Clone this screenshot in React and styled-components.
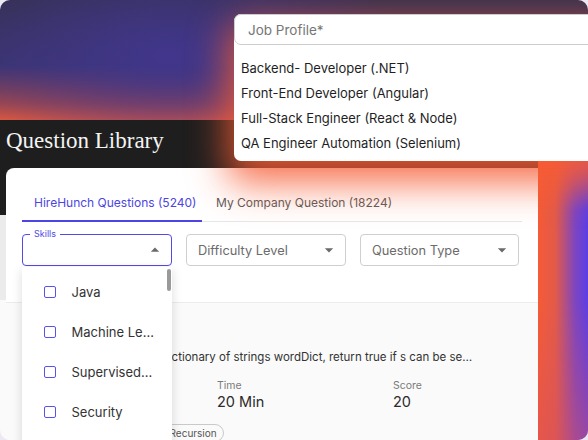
import React from 'react';
import styled, { createGlobalStyle } from 'styled-components';

const GlobalStyle = createGlobalStyle`
  html, body {
    margin: 0;
    padding: 0;
    background: #ece9f3;
  }
  * {
    box-sizing: border-box;
  }
`;

const Frame = styled.div`
  position: relative;
  width: 588px;
  height: 440px;
  overflow: hidden;
  border-radius: 10px;
  display: flex;
  flex-direction: column;
  font-family: Inter, "Noto Sans", sans-serif;
`;

const Hero = styled.div`
  height: 120px;
  flex: none;
  background:
    radial-gradient(ellipse 240px 110px at 170px 55px, #41368c 0%, rgba(65, 54, 140, 0) 100%),
    linear-gradient(180deg, #35314f 0%, #3a346c 55%, #a84948 86%, #e65a3b 100%);
`;

const Main = styled.div`
  flex: 1;
  display: flex;
`;

const Panel = styled.div`
  width: 538px;
  display: flex;
  flex-direction: column;
  padding-left: 6px;
  background: linear-gradient(180deg, #1e1e1e 0, #1e1e1e 95px, #ebebeb 95px, #ebebeb 180px, #fafafa 180px);
`;

const PageTitle = styled.h1`
  margin: 0;
  height: 48px;
  padding-top: 7px;
  font-family: "Liberation Serif", "DejaVu Serif", serif;
  font-weight: 400;
  font-size: 23px;
  line-height: 28px;
  color: #f4f4f4;
`;

const Card = styled.div`
  flex: 1;
  display: flex;
  flex-direction: column;
  background: #fff;
  border-radius: 8px 0 0 0;
`;

const Top = styled.div`
  padding: 17px 16px 0;
`;

const Tabs = styled.div`
  display: flex;
  box-shadow: inset 0 -1px 0 #e7e7e7;
`;

const Tab = styled.div`
  height: 37px;
  padding: 0 ${p => (p.$active ? '12px' : '14px')};
  width: ${p => p.$w}px;
  display: flex;
  align-items: center;
  white-space: nowrap;
  font-size: 12px;
  color: ${p => (p.$active ? '#4c45e3' : '#5a5a5a')};
  border-bottom: 2px solid ${p => (p.$active ? '#4c45e3' : 'transparent')};
`;

const Filters = styled.div`
  display: flex;
  gap: 14px;
  margin-top: 12px;
`;

const Select = styled.div`
  position: relative;
  width: ${p => p.$w}px;
  height: 32px;
  border: ${p => (p.$focused ? '1.5px solid #5249e6' : '1px solid #cfcfcf')};
  border-radius: 4px;
  display: flex;
  align-items: center;
  justify-content: space-between;
  padding: 0 10px 0 11px;
  font-size: 12.8px;
  color: #6b6b6b;
`;

const FloatLabel = styled.span`
  position: absolute;
  top: -7px;
  left: 7px;
  padding: 0 4px;
  background: #fff;
  font-size: 9px;
  line-height: 12px;
  color: #5249e6;
`;

const CaretSvg = styled.svg`
  width: 20px;
  height: 20px;
  fill: #6a6a6a;
  margin-left: auto;
  margin-right: -4px;
`;

const Caret = ({ up }) => (
  <CaretSvg viewBox="0 0 24 24">
    <path d={up ? 'M7 14l5-5 5 5z' : 'M7 10l5 5 5-5z'} />
  </CaretSvg>
);

const SkillMenu = styled.div`
  position: absolute;
  top: 32px;
  left: -1.5px;
  width: 150px;
  height: 180px;
  background: #fff;
  box-shadow: 0 3px 10px rgba(0, 0, 0, 0.14);
  padding-top: 5px;
  z-index: 2;
`;

const Scroll = styled.div`
  position: absolute;
  right: 1px;
  top: 2px;
  width: 4px;
  height: 22px;
  border-radius: 2px;
  background: #9a9a9a;
`;

const SkillItem = styled.div`
  height: 40px;
  display: flex;
  align-items: center;
  gap: 16px;
  padding-left: 22px;
  font-size: 13px;
  color: #333;
`;

const Check = styled.span`
  width: 12px;
  height: 12px;
  border: 1.5px solid #5a50ea;
  border-radius: 2px;
  flex: none;
`;

const Results = styled.div`
  flex: 1;
  margin-top: 36px;
  background: #fafafa;
  border-top: 1px solid #ececec;
  padding: 20px 35px 0;
`;

const QTitle = styled.div`
  font-size: 14px;
  line-height: 20px;
  font-weight: 600;
  color: #222;
`;

const QText = styled.div`
  margin-top: 6px;
  max-width: 437px;
  font-size: 11.5px;
  line-height: 16px;
  color: #333;
  white-space: nowrap;
  overflow: hidden;
  text-overflow: ellipsis;
`;

const Meta = styled.div`
  display: grid;
  grid-template-columns: 176px 176px 176px;
  margin-top: 14px;
`;

const MetaLabel = styled.div`
  font-size: 10.5px;
  line-height: 13px;
  color: #7a7a7a;
`;

const MetaValue = styled.div`
  font-size: 14.5px;
  line-height: 19px;
  color: #2b2b2b;
`;

const Chips = styled.div`
  display: flex;
  gap: 6px;
  margin-top: 13px;
`;

const Chip = styled.span`
  height: 18px;
  padding: 0 ${p => p.$pad || 6}px;
  border: 1px solid #c9c9c9;
  border-radius: 9px;
  font-size: 10px;
  line-height: 16px;
  white-space: nowrap;
  color: #555;
`;

const Edge = styled.div`
  flex: 1;
  background:
    linear-gradient(180deg, #f55b36 0px, rgba(245, 91, 54, 0) 90px),
    linear-gradient(180deg, rgba(0, 0, 0, 0) 55%, rgba(215, 80, 95, 0.5) 100%),
    linear-gradient(90deg, #f55b36 0%, #e25a4a 35%, #7c45c2 75%, #5a3ee6 100%);
`;

const JobMenu = styled.div`
  position: absolute;
  top: 14px;
  left: 234px;
  width: 378px;
  background: #fff;
  border-radius: 7px;
  z-index: 5;
  box-shadow: 0 16px 38px 6px rgba(246, 92, 52, 0.88);
`;

const JobInput = styled.div`
  height: 31px;
  border: 1px solid #cdcdcd;
  border-radius: 7px;
  display: flex;
  align-items: center;
  padding: 0 10px 0 13px;
  font-size: 13.5px;
  color: #767676;
`;

const JobList = styled.div`
  padding: 10px 0 6px;
`;

const JobOption = styled.div`
  height: 25px;
  display: flex;
  align-items: center;
  padding-left: 7px;
  font-size: 13px;
  color: #1f1f1f;
`;

const skills = ['Java', 'Machine Le...', 'Supervised...', 'Security', 'Python'];
const jobs = [
  'Backend- Developer (.NET)',
  'Front-End Developer (Angular)',
  'Full-Stack Engineer (React & Node)',
  'QA Engineer Automation (Selenium)',
];

export default function App() {
  return (
    <>
      <GlobalStyle />
      <Frame>
        <Hero />
        <Main>
          <Panel>
            <PageTitle>Question Library</PageTitle>
            <Card>
              <Top>
                <Tabs>
                  <Tab $active $w={180}>HireHunch Questions (5240)</Tab>
                  <Tab $w={200}>My Company Question (18224)</Tab>
                </Tabs>
                <Filters>
                  <Select $w={150} $focused>
                    <FloatLabel>Skills</FloatLabel>
                    <Caret up />
                    <SkillMenu>
                      <Scroll />
                      {skills.map(s => (
                        <SkillItem key={s}>
                          <Check />
                          {s}
                        </SkillItem>
                      ))}
                    </SkillMenu>
                  </Select>
                  <Select $w={160}>
                    Difficulty Level
                    <Caret />
                  </Select>
                  <Select $w={159}>
                    Question Type
                    <Caret />
                  </Select>
                </Filters>
              </Top>
              <Results>
                <QTitle>Word Break</QTitle>
                <QText>
                  Given a string s and a dictionary of strings wordDict, return true if s can be segmented into a space-separated sequence of one or more dictionary words.
                </QText>
                <Meta>
                  <div>
                    <MetaLabel>Type</MetaLabel>
                    <MetaValue>Coding</MetaValue>
                  </div>
                  <div>
                    <MetaLabel>Time</MetaLabel>
                    <MetaValue>20 Min</MetaValue>
                  </div>
                  <div>
                    <MetaLabel>Score</MetaLabel>
                    <MetaValue>20</MetaValue>
                  </div>
                </Meta>
                <Chips>
                  <Chip $pad={3}>Dynamic Programming</Chip>
                  <Chip>Recursion</Chip>
                </Chips>
              </Results>
            </Card>
          </Panel>
          <Edge />
        </Main>
        <JobMenu>
          <JobInput>
            Job Profile*
            <Caret />
          </JobInput>
          <JobList>
            {jobs.map(j => (
              <JobOption key={j}>{j}</JobOption>
            ))}
          </JobList>
        </JobMenu>
      </Frame>
    </>
  );
}
